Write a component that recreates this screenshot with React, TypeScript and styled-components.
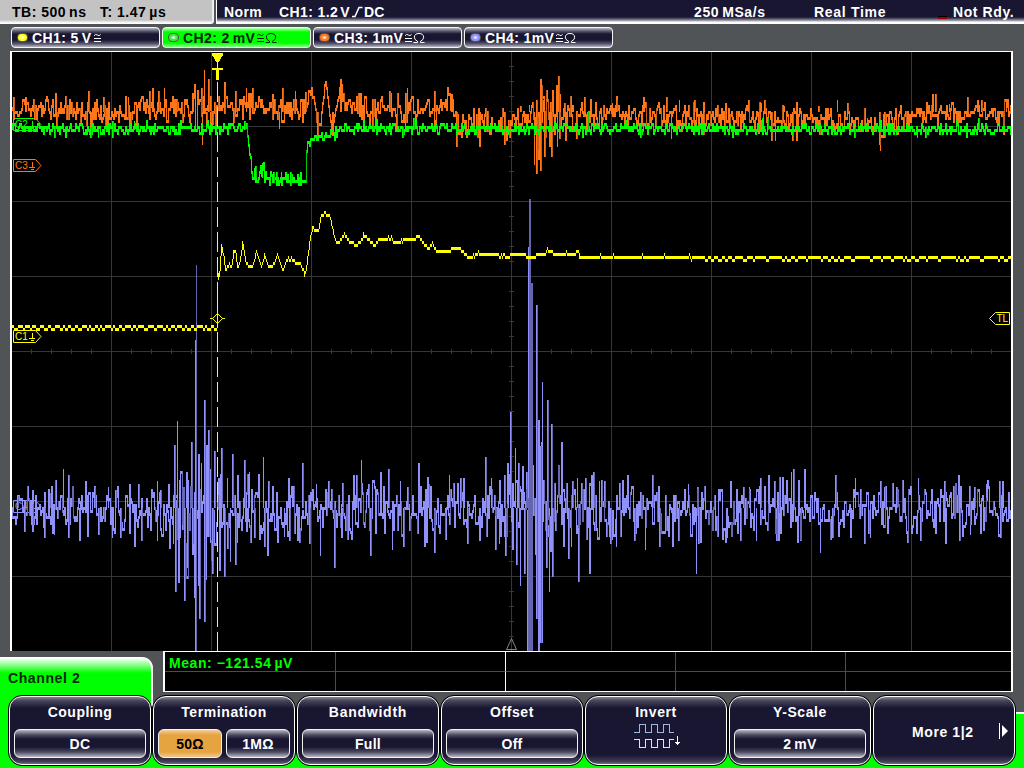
import React from "react";
import styled, { createGlobalStyle, css } from "styled-components";

const NAVY = "#191632";
const GREEN = "#00ff00";
const SLATE = "#505457";

const GlobalStyle = createGlobalStyle`
  html, body { margin: 0; padding: 0; overflow: hidden; background: ${SLATE}; }
  * { box-sizing: border-box; }
`;

/* ---------- layout ---------- */

const Screen = styled.div`
  width: 1024px;
  height: 768px;
  display: flex;
  flex-direction: column;
  background: ${SLATE};
  font: bold 14px/18px "Liberation Sans", Arial, sans-serif;
  letter-spacing: 0.6px;
  color: #fff;
  white-space: pre;
`;

const Header = styled.header`
  display: flex;
  gap: 2px;
  height: 24px;
`;

const TimeBase = styled.div`
  width: 214px;
  padding: 3px 0 0 12px;
  display: flex;
  color: #000;
  background: linear-gradient(to bottom, #c3c3c3 20px, #eee 22px, #fff 23px);
  border-right: 2px solid #eee;
  border-bottom-right-radius: 3px;
`;

const Status = styled.div`
  flex: 1;
  display: flex;
  padding: 3px 0 0 7px;
  border-left: 1px solid #fff;
  background: linear-gradient(to bottom, ${NAVY} 17px, #5b5970 19px, #b5b4be 21px, #fff 22px 24px);
`;

const Label = styled.span<{ $w?: number; $ls?: number }>`
  display: block;
  ${(p) => p.$w !== undefined && css`width: ${p.$w}px;`}
  letter-spacing: ${(p) => p.$ls ?? 0.6}px;
`;

const Unit = styled.span<{ $gap?: number }>`
  margin-left: ${(p) => p.$gap ?? 3}px;
`;

const AlertMark = styled.i`
  width: 9px;
  height: 3px;
  margin: 13px 6px 0 0;
  border-top: 1px solid #000;
  border-bottom: 2px solid #a00000;
`;

const Channels = styled.nav`
  display: flex;
  gap: 2px;
  height: 27px;
  padding: 3px 0 0 11px;
`;

const bevel = `linear-gradient(to bottom, #b9b8c3 0, #5d5b72 3px, ${NAVY} 6px, ${NAVY} calc(100% - 7px), #5d5b72 calc(100% - 3px), #b9b8c3 100%)`;

const ChannelChip = styled.div<{ $active?: boolean }>`
  width: 149px;
  height: 21px;
  display: flex;
  padding: 1px 0 0 5px;
  border: 1px solid #f4f4f4;
  border-radius: 4px;
  background: ${(p) =>
    p.$active ? `linear-gradient(to bottom, #baffba, ${GREEN} 4px, ${GREEN} 15px, #8aff8a)` : bevel};
  color: ${(p) => (p.$active ? "#00230a" : "#fff")};
`;

const Led = styled.i<{ $color: string }>`
  width: 11px;
  height: 9px;
  margin: 4px 4px 0 0;
  border: 1px solid #55534a;
  border-radius: 4px;
  background: radial-gradient(ellipse at center, #fff 0, ${(p) => p.$color} 45%);
`;

const Coupling = styled.span`
  display: flex;
  align-items: flex-start;
  margin-left: 1px;
  svg { margin-top: 4px; }
`;

const PlotArea = styled.main`
  height: 600px;
  padding-left: 10px;
  svg { display: block; }
`;

const Readouts = styled.section`
  display: flex;
  height: 41px;
`;

const ChannelTab = styled.div`
  width: 153px;
  height: 35px;
  margin: 6px 10px 0 0;
  padding: 11px 0 0 8px;
  border-right: 2px solid #fff;
  border-top: 1px solid #fff;
  border-top-right-radius: 11px;
  background: linear-gradient(to bottom, #fff, ${GREEN} 15px);
  color: #002a08;
`;

const Measurements = styled.div`
  width: 850px;
  height: 41px;
  display: grid;
  grid-template-columns: 171px 170px 170px 170px 1fr;
  grid-template-rows: 20px 1fr;
  border: solid #fff;
  border-width: 1px 2px 1px 2px;
  background: #000;
  color: ${GREEN};
`;

const MeasureCell = styled.div<{ $strong?: boolean; $last?: boolean; $top?: boolean }>`
  padding: 2px 0 0 4px;
  border-right: ${(p) => (p.$last ? 0 : 1)}px solid ${(p) => (p.$strong ? "#fff" : "#4c4c4c")};
  border-bottom: ${(p) => (p.$top ? 1 : 0)}px solid #4c4c4c;
`;

const Menu = styled.footer`
  display: flex;
  height: 76px;
  padding: 3px 8px 0;
  background:
    linear-gradient(#fff, #fff) 151px 0 / 2px 14px no-repeat,
    linear-gradient(${GREEN}, ${GREEN}) 0 0 / 151px 100% no-repeat,
    linear-gradient(to bottom, ${SLATE} 20px, #fff 20px 22px, ${GREEN} 22px);
`;

const MenuKey = styled.div`
  width: 144px;
  height: 71px;
  border: 1px solid #000;
  border-radius: 14px;
  background: #000;
`;

const KeyFace = styled.div<{ $wide?: boolean }>`
  height: 69px;
  display: flex;
  flex-direction: column;
  align-items: center;
  padding: ${(p) => (p.$wide ? "26px 0 0" : "6px 4px 0")};
  border: 1px solid #fff;
  border-radius: 13px;
  background: linear-gradient(to bottom, #84828f 0, #454259 4px, ${NAVY} 11px, ${NAVY} 58px, #454259 65px, #77758a 100%);
`;

const Values = styled.div`
  display: flex;
  gap: 4px;
  width: 132px;
  margin-top: 8px;
`;

const Value = styled.div<{ $on?: boolean }>`
  flex: 1;
  height: 29px;
  padding-top: 5px;
  text-align: center;
  letter-spacing: 0.3px;
  border: 1.5px solid #f2f2f2;
  border-radius: 6px;
  background: ${(p) =>
    p.$on
      ? "linear-gradient(to bottom, #f3cf9e, #e5a440 5px, #e5a440 22px, #f0c68c)"
      : `linear-gradient(to bottom, #b9b8c3, #4b4960 5px, ${NAVY} 9px, ${NAVY} 17px, #4b4960 22px, #b9b8c3)`};
  color: ${(p) => (p.$on ? "#000" : "#fff")};
`;

const MoreRow = styled.div`
  display: flex;
  width: 100%;
  padding-left: 38px;
  svg { margin: 0 0 0 24px; }
`;

/* ---------- traces ---------- */

type Col = [number, number, number];
type Pt = [number, number];

const makeRandom = (seed: number) => () => {
  seed = (seed + 0x6d2b79f5) | 0;
  let t = Math.imul(seed ^ (seed >>> 15), 1 | seed);
  t = (t + Math.imul(t ^ (t >>> 7), 61 | t)) ^ t;
  return ((t ^ (t >>> 14)) >>> 0) / 4294967296;
};

const lerp = (pts: Pt[], x: number) => {
  if (x <= pts[0][0]) return pts[0][1];
  for (let i = 1; i < pts.length; i++) {
    if (x <= pts[i][0]) {
      const [x0, y0] = pts[i - 1];
      const [x1, y1] = pts[i];
      return y0 + ((y1 - y0) * (x - x0)) / (x1 - x0 || 1);
    }
  }
  return pts[pts.length - 1][1];
};

const toPath = (cols: Col[]) => cols.map(([x, a, b]) => `M${x + 0.5} ${a}V${b}`).join("");

/* Samples sit on a 3px vertical raster; each pixel column spans two neighbours. */
function noisy(seed: number, mean: Pt[], amp: Pt[], peaks: Col[]) {
  const rnd = makeRandom(seed);
  const bright: Col[] = [];
  const dark: Col[] = [];
  let prev = lerp(mean, 12);
  for (let x = 12; x < 1011; x++) {
    const g = rnd() + rnd() - 1;
    const hold = rnd() < 0.08;
    const y = hold ? prev : Math.round((lerp(mean, x) + g * lerp(amp, x)) / 3) * 3;
    const a = Math.min(prev, y);
    const b = Math.max(prev, y) + 3;
    (b - a > 12 && rnd() < 0.25 ? dark : bright).push([x, a, b]);
    prev = y;
  }
  peaks.forEach(([x, a, b], i) => {
    bright.push([x, a, b]);
    if (i % 4 === 1) bright.push([x + 1, a, b]);
    else if (i % 4 !== 3) dark.push([x + 1, a, b]);
  });
  return { bright: toPath(bright), dark: toPath(dark) };
}

const up = (base: number, list: Pt[]): Col[] => list.map(([x, t]) => [x, t, base]);
const down = (base: number, list: Pt[]): Col[] => list.map(([x, b]) => [x, base, b]);

const ch4 = noisy(
  41,
  [[12, 507], [165, 510], [255, 510], [1011, 509]],
  [[12, 25], [50, 28], [165, 32], [175, 62], [195, 72], [212, 56], [250, 38], [262, 34], [500, 35], [512, 52], [526, 58], [550, 52], [570, 40], [620, 34], [1011, 33]],
  [
    ...up(508, [[17, 496], [32, 490], [49, 493], [63, 469], [68, 475], [85, 481], [94, 487], [108, 487], [115, 490], [129, 484], [138, 484], [157, 481], [160, 490], [168, 484], [174, 445], [177, 421], [183, 487], [186, 472], [191, 442], [201, 463], [204, 400], [206, 445], [208, 430], [210, 469], [214, 451], [218, 478], [221, 448], [227, 478], [232, 454], [237, 475], [244, 460], [249, 472]]),
    ...down(508, [[24, 532], [32, 532], [44, 538], [54, 535], [68, 538], [79, 541], [98, 535], [112, 538], [120, 538], [134, 547], [141, 541], [157, 541], [175, 592], [178, 583], [184, 601], [187, 568], [192, 544], [194, 598], [204, 622], [206, 580], [212, 574], [219, 571], [224, 577], [230, 562], [235, 565], [246, 532], [254, 538]]),
    [173, 496, 544], [176, 500, 540], [179, 480, 538], [182, 487, 530], [188, 480, 560],
    [195, 340, 651], [198, 454, 586], [199, 508, 619],
    ...up(508, [[263, 457], [268, 481], [288, 478], [302, 463], [316, 484], [328, 481], [353, 475], [356, 475], [361, 460], [368, 484], [380, 472], [388, 469], [400, 481], [407, 487], [418, 463], [428, 484], [449, 475], [460, 478], [463, 478], [485, 457], [491, 478], [504, 475], [507, 463], [510, 412], [515, 448], [518, 463], [522, 466], [526, 472], [541, 442], [551, 424], [561, 442], [572, 481], [577, 478], [585, 478], [591, 475], [593, 472], [599, 481], [604, 481]]),
    ...down(508, [[267, 556], [264, 547], [284, 537], [289, 541], [297, 541], [309, 544], [320, 556], [334, 568], [341, 538], [370, 556], [392, 550], [403, 547], [424, 547], [434, 553], [445, 535], [467, 544], [479, 541], [495, 550], [499, 544], [505, 556], [512, 550], [516, 565], [520, 586], [524, 574], [541, 643], [546, 568], [549, 592], [552, 577], [563, 547], [568, 559], [571, 547], [578, 582], [589, 574], [610, 544], [616, 547]]),
    [527, 510, 651], [528, 247, 651], [531, 283, 651], [532, 283, 651],
    [536, 305, 619], [538, 420, 651], [540, 446, 643], [542, 382, 508], [547, 400, 520],
    ...up(508, [[627, 475], [652, 475], [688, 484], [697, 487], [730, 481], [743, 487], [749, 487], [760, 478], [768, 475], [774, 481], [791, 472], [793, 469], [804, 469], [835, 475], [855, 478], [880, 481], [884, 487], [896, 487], [918, 478], [944, 481], [958, 475], [974, 487], [986, 484], [999, 481], [1002, 481]]),
    ...down(508, [[634, 541], [645, 550], [659, 547], [672, 547], [678, 541], [696, 574], [698, 544], [726, 538], [740, 541], [756, 541], [776, 541], [778, 541], [800, 541], [820, 553], [832, 538], [850, 538], [864, 544], [870, 538], [920, 541], [945, 544], [959, 541], [970, 535], [1000, 538]]),
  ]
);

/* The two overdriven bursts, drawn in the faded shade. */
const ch4Bursts = toPath([
  [196, 265, 651],
  [529, 199, 651],
  [530, 199, 651],
  [531, 283, 651],
  [537, 305, 619],
]);

const ch3 = noisy(
  9,
  [[12, 107], [35, 105], [60, 110], [120, 113], [150, 106], [200, 106], [240, 106], [305, 107], [310, 88], [314, 102], [318, 136], [325, 80], [331, 132], [336, 104], [340, 84], [345, 105], [400, 108], [425, 112], [434, 118], [448, 96], [458, 128], [475, 118], [500, 122], [560, 118], [590, 114], [610, 108], [625, 114], [690, 114], [740, 115], [800, 118], [880, 123], [910, 114], [940, 109], [1011, 110]],
  [[12, 16], [60, 17], [140, 17], [185, 18], [195, 26], [215, 23], [230, 17], [304, 16], [310, 6], [340, 6], [346, 18], [425, 20], [448, 14], [470, 21], [530, 18], [538, 40], [560, 30], [575, 18], [620, 16], [1011, 16]],
  [
    ...up(112, [[13, 97], [25, 97], [33, 99], [55, 103], [88, 91], [96, 99], [103, 97], [128, 97], [149, 91], [152, 88], [158, 91], [164, 88], [176, 99], [192, 94], [201, 88], [204, 70], [208, 79], [224, 82], [235, 91], [246, 88], [252, 88], [272, 94], [282, 88], [295, 91], [305, 92], [340, 79], [389, 91], [407, 88], [434, 91], [451, 94], [520, 106], [529, 105], [536, 100], [540, 79], [541, 85], [543, 100], [550, 102], [556, 85], [558, 76], [560, 94], [564, 103], [572, 105], [584, 97], [612, 103], [616, 100], [643, 97], [666, 97], [679, 100], [694, 100], [725, 103], [748, 100], [761, 103], [764, 100], [783, 106], [818, 106], [837, 100], [847, 103], [932, 94], [935, 94], [949, 104], [967, 97], [977, 100], [981, 100], [1006, 100]]),
    ...down(112, [[56, 127], [90, 130], [130, 127], [202, 145], [206, 128], [210, 128], [212, 125], [279, 129], [317, 141], [332, 136], [372, 132], [405, 130], [456, 147], [479, 147], [504, 145], [534, 165], [536, 174], [538, 160], [540, 171], [541, 169], [544, 157], [549, 147], [551, 157], [557, 147], [559, 139], [565, 141], [576, 139], [671, 139], [703, 135], [758, 134], [771, 141], [775, 141], [792, 141], [796, 141], [879, 145], [880, 151], [884, 138], [1003, 135]]),
  ]
);

const ch2 = noisy(
  77,
  [[12, 127], [246, 127], [247, 133], [249, 153], [251, 171], [262, 172], [275, 177], [290, 178], [303, 180], [305, 155], [307, 143], [312, 138], [318, 134], [332, 131], [345, 127], [490, 127], [505, 129], [520, 127], [1011, 128]],
  [[12, 7], [246, 7], [248, 2], [251, 13], [262, 10], [302, 9], [304, 1], [314, 5], [330, 8], [360, 7], [1011, 7]],
  [
    ...down(127, [[54, 138], [65, 138], [90, 138], [98, 138], [112, 138], [150, 135], [402, 138], [437, 135], [640, 138], [732, 138], [854, 138], [917, 138], [925, 138], [966, 138]]),
    ...up(130, [[112, 121], [134, 121], [244, 121], [376, 119], [413, 118], [554, 121], [587, 112], [762, 118], [767, 118], [867, 118], [978, 118]]),
    ...down(172, [[255, 183], [273, 183], [281, 186], [290, 186], [300, 186]]),
    ...up(178, [[255, 166], [262, 163], [276, 172], [285, 172]]),
  ]
);

const yellowKnots: Pt[] = [
  [218, 281], [219, 270], [221, 244], [223, 254], [225, 269], [227, 265], [231, 265], [233, 251], [235, 251], [237, 265], [239, 262], [242, 242], [244, 253], [246, 262], [249, 266], [252, 264], [256, 251], [261, 266], [264, 254], [268, 266], [273, 263], [277, 254], [282, 269], [286, 259], [293, 260], [300, 262], [304, 275], [307, 260], [309, 240], [312, 227], [318, 229], [321, 215], [324, 212], [329, 214], [332, 227], [336, 242], [338, 241], [344, 232], [350, 242], [357, 243], [363, 236], [366, 236], [374, 244], [378, 239], [392, 239], [397, 242], [403, 239], [415, 239], [418, 234], [427, 248], [432, 242], [437, 251], [448, 251], [452, 246], [460, 248], [468, 256], [477, 254], [498, 254], [503, 257], [507, 256], [514, 252], [523, 252], [528, 257], [534, 256], [538, 252], [552, 251], [555, 254], [578, 254], [582, 257], [700, 257], [750, 258], [1011, 258],
];

const ch1 = (() => {
  const rnd = makeRandom(5);
  const cols: Col[] = [];
  let high = true;
  let left = 3;
  const dither = (longest: number) => {
    if (--left <= 0) {
      high = !high;
      left = 2 + Math.floor(rnd() * (high ? longest : 3));
    }
    return high;
  };
  for (let x = 12; x < 217; x++) {
    const y = dither(5) ? 325 : 328;
    cols.push([x, y, y + 3]);
  }
  cols.push([217, 282, 328]);
  let prev = 270;
  for (let x = 218; x < 1011; x++) {
    const flat = x > 582;
    let y: number;
    if (x > 690) y = dither(14) ? 256 : 259;
    else if (flat) y = rnd() < 0.06 ? 253 : 256;
    else {
      const jitter = rnd() < 0.05 ? -3 : 0;
      y = Math.round((lerp(yellowKnots, x) - 1) / 3) * 3 + 1 + jitter;
    }
    const rise = Math.abs(prev - y) > 3;
    if (flat || !rise) cols.push([x, y, y + 3]);
    else cols.push(prev < y ? [x, prev + 3, y + 3] : [x, y, prev]);
    prev = y;
  }
  return toPath(cols);
})();

const range = (from: number, to: number, step: number) =>
  Array.from({ length: Math.floor((to - from) / step) + 1 }, (_, i) => from + i * step);

function ChannelTag({ y, name, color }: { y: number; name: string; color: string }) {
  return (
    <g fill="none" stroke={color} transform={`translate(13.5 ${y + 0.5})`}>
      <path d="M0 0H22L27.5 6L22 12H0Z" />
      <path d="M18.5 2V7M15.5 7.5H21M17 9.5H20" shapeRendering="crispEdges" />
      <text x="1.5" y="9.5" fill={color} stroke="none" fontSize="10" fontWeight="400" letterSpacing="0" fontFamily="Liberation Sans, sans-serif">
        {name}
      </text>
    </g>
  );
}

function Plot() {
  return (
    <svg width="1003" height="600" viewBox="10 51 1003 600">
      <rect x="10" y="51" width="1003" height="601" fill="#000" />
      <g stroke="#363636" shapeRendering="crispEdges">
        {range(111, 911, 100).map((x) => <path key={x} d={`M${x + 0.5} 52V651`} />)}
        {range(126, 576, 75).map((y) => <path key={y} d={`M12 ${y + 0.5}H1011`} />)}
        {range(66, 636, 15).map((y) => <path key={y} d={`M509 ${y + 0.5}H514`} />)}
        {range(31, 991, 20).map((x) => <path key={x} d={`M${x + 0.5} 349V354`} />)}
      </g>
      <ChannelTag y={500} name="C4" color="#9090ff" />
      <ChannelTag y={159} name="C3" color="#ff7518" />
      <ChannelTag y={118} name="C2" color={GREEN} />
      <ChannelTag y={330} name="C1" color="#ffff00" />
      <g fill="none" shapeRendering="crispEdges">
        <path d={ch4.bright} stroke="#9090fb" />
        <path d={ch4.dark} stroke="#6767b4" />
        <path d={ch4Bursts} stroke="#6464ae" />
        <path d={ch3.bright} stroke="#ff7518" />
        <path d={ch3.dark} stroke="#c9601a" />
        <path d={ch2.bright} stroke={GREEN} />
        <path d={ch2.dark} stroke="#00c800" />
        <path d={ch1} stroke="#ffff00" />
        <path d="M217.5 82V651" stroke="#ffff00" strokeDasharray="20 5" />
      </g>
      <g fill="#ffff00" shapeRendering="crispEdges">
        <path d="M212 53H223V55L218 63H217L212 55Z" />
        <path d="M217 62h1v6h-1zM212 68H223V70H219V80H216V70H212Z" />
      </g>
      <path d="M210 318.5H213M222 318.5H225M212.5 318.5L217.5 313.5L222.5 318.5L217.5 323.5Z" fill="none" stroke="#ffff00" />
      <g fill="none" stroke="#ffff00">
        <path d="M1009.5 312.5V324.5H995.5L989.5 318.5L995.5 312.5Z" />
        <text x="996.5" y="322" fill="#ffff00" stroke="none" fontSize="10" fontWeight="400" letterSpacing="0" fontFamily="Liberation Sans, sans-serif">TL</text>
      </g>
      <path d="M511.5 638.5L516.5 649.5H506.5Z" fill="none" stroke="#858585" />
      <path d="M11 651V51.5H1012V651" fill="none" stroke="#fff" shapeRendering="crispEdges" />
      <path d="M11 51V651M1012 52V651" fill="none" stroke="#fff" strokeWidth="2" shapeRendering="crispEdges" />
    </svg>
  );
}

/* ---------- small pieces ---------- */

const RisingEdge = () => (
  <svg width="12" height="18" viewBox="0 0 12 18">
    <path d="M0 13.5H3L7 4.5H10.5" fill="none" stroke="#fff" strokeWidth="1.5" />
  </svg>
);

function CouplingMark({ ohm }: { ohm?: boolean }) {
  return (
    <Coupling>
      <svg width={ohm ? 22 : 9} height="12" viewBox={`0 0 ${ohm ? 22 : 9} 12`} fill="none" stroke="currentColor">
        <path d="M1 2.8Q2.5 .4 4.3 2T7.6 1.4" />
        <path d="M1 5.5H8M1 8.5H8" shapeRendering="crispEdges" />
        {ohm && <path d="M9.5 9.5H13.5V8.2Q10.3 6.8 10.3 4.2Q10.6 .5 15 .5Q19.4 .5 19.7 4.2Q19.7 6.8 16.5 8.2V9.5H20.5" />}
      </svg>
    </Coupling>
  );
}

interface Channel {
  name: string;
  value: string;
  unit: string;
  gap: number;
  color: string;
  ohm?: boolean;
  active?: boolean;
}

const channels: Channel[] = [
  { name: "CH1:", value: "5", unit: "V", gap: 3, color: "#ffff20" },
  { name: "CH2:", value: "2", unit: "mV", gap: 3, color: "#40e840", ohm: true, active: true },
  { name: "CH3:", value: "1", unit: "mV", gap: 0, color: "#ff7820", ohm: true },
  { name: "CH4:", value: "1", unit: "mV", gap: 0, color: "#9090ff", ohm: true },
];

const InvertIcon = () => (
  <svg width="48" height="28" viewBox="0 0 48 28" fill="none" shapeRendering="crispEdges">
    <path d="M2 11.5H7.5V3.5H13.5V11.5H19.5V3.5H25.5V11.5H31.5V3.5H37.5V11.5H42" stroke="#9dbbe0" />
    <path d="M2 18.5H7.5V26.5H13.5V18.5H19.5V26.5H25.5V18.5H31.5V26.5H37.5V18.5H42" stroke="#b8f4ff" />
    <path d="M45.5 15V24M43 21.5H48M44 22.5H47" stroke="#fff" />
  </svg>
);

function Key({ title, ls, children }: { title: string; ls?: number; children: React.ReactNode }) {
  return (
    <MenuKey>
      <KeyFace>
        <Label $ls={ls}>{title}</Label>
        {children}
      </KeyFace>
    </MenuKey>
  );
}

export default function App() {
  return (
    <>
      <GlobalStyle />
      <Screen>
        <Header>
          <TimeBase>
            <Label $w={88} $ls={0.5}>TB: 500<Unit>ns</Unit></Label>
            <Label $ls={0.5}>T: 1.47<Unit>µs</Unit></Label>
          </TimeBase>
          <Status>
            <Label $w={55} $ls={0.4}>Norm</Label>
            <Label $w={73} $ls={0.4}>CH1: 1.2<Unit $gap={2}>V</Unit></Label>
            <RisingEdge />
            <Label $w={330} $ls={0.1}>DC</Label>
            <Label $w={120}>250<Unit>MSa/s</Unit></Label>
            <Label $w={124} $ls={0.7}>Real Time</Label>
            <AlertMark />
            <Label $ls={0.6}>Not Rdy.</Label>
          </Status>
        </Header>
        <Channels>
          {channels.map((c) => (
            <ChannelChip key={c.name} $active={c.active}>
              <Led $color={c.color} />
              <Label $ls={0.4}>
                {c.name} {c.value}
                <Unit $gap={c.gap}>{c.unit}</Unit>
              </Label>
              <CouplingMark ohm={c.ohm} />
            </ChannelChip>
          ))}
        </Channels>
        <PlotArea>
          <Plot />
        </PlotArea>
        <Readouts>
          <ChannelTab>Channel 2</ChannelTab>
          <Measurements>
            {[0, 1].map((row) =>
              [0, 1, 2, 3, 4].map((col) => (
                <MeasureCell key={`${row}-${col}`} $top={row === 0} $strong={col === 1} $last={col === 4}>
                  {row === 0 && col === 0 && <Label $w={150} $ls={0.55}>Mean: −121.54<Unit>µV</Unit></Label>}
                </MeasureCell>
              ))
            )}
          </Measurements>
        </Readouts>
        <Menu>
          <Key title="Coupling" ls={0.5}>
            <Values><Value>DC</Value></Values>
          </Key>
          <Key title="Termination">
            <Values><Value $on>50Ω</Value><Value>1MΩ</Value></Values>
          </Key>
          <Key title="Bandwidth" ls={0.75}>
            <Values><Value>Full</Value></Values>
          </Key>
          <Key title="Offset">
            <Values><Value>Off</Value></Values>
          </Key>
          <Key title="Invert">
            <InvertIcon />
          </Key>
          <Key title="Y-Scale">
            <Values><Value>2<Unit>mV</Unit></Value></Values>
          </Key>
          <MenuKey>
            <KeyFace $wide>
              <MoreRow>
                <Label>More 1|2</Label>
                <svg width="12" height="16" viewBox="0 0 12 16">
                  <path d="M1.5 0V16" stroke="#fff" />
                  <path d="M4 2L10 8L4 14Z" fill="#fff" />
                </svg>
              </MoreRow>
            </KeyFace>
          </MenuKey>
        </Menu>
      </Screen>
    </>
  );
}
